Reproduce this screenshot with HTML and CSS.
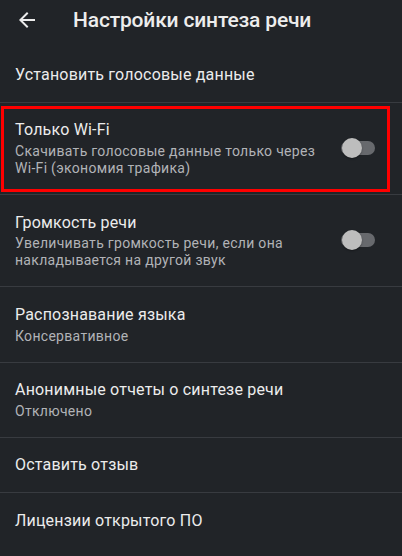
FILE: index.html
```html
<!DOCTYPE html>
<html lang="ru">
<head>
<meta charset="utf-8">
<title>Настройки синтеза речи</title>
<link rel="stylesheet" href="styles.css">
</head>
<body>
<div class="app">
  <header class="toolbar">
    <span class="back" aria-label="Назад">
      <svg width="24" height="24" viewBox="0 0 24 24"><path fill="#ececec" d="M20 11H7.83l5.59-5.59L12 4l-8 8 8 8 1.41-1.41L7.83 13H20v-2z"/></svg>
    </span>
    <h1 class="title">Настройки синтеза речи</h1>
  </header>
  <ul class="list">
    <li class="row"><div class="text"><div class="row-title">Установить голосовые данные</div></div></li>
    <li class="row row-toggle">
      <div class="text">
        <div class="row-title">Только <span class="nw">Wi-Fi</span></div>
        <div class="row-sub">Скачивать голосовые данные только через <span class="nw">Wi-Fi</span> (экономия трафика)</div>
      </div>
      <span class="switch"><span class="thumb"></span></span>
      <span class="mark"></span>
    </li>
    <li class="row row-toggle">
      <div class="text">
        <div class="row-title">Громкость речи</div>
        <div class="row-sub">Увеличивать громкость речи, если она накладывается на другой звук</div>
      </div>
      <span class="switch"><span class="thumb"></span></span>
    </li>
    <li class="row"><div class="text"><div class="row-title">Распознавание языка</div><div class="row-sub">Консервативное</div></div></li>
    <li class="row"><div class="text"><div class="row-title">Анонимные отчеты о синтезе речи</div><div class="row-sub">Отключено</div></div></li>
    <li class="row"><div class="text"><div class="row-title">Оставить отзыв</div></div></li>
    <li class="row last"><div class="text"><div class="row-title">Лицензии открытого ПО</div></div></li>
  </ul>
</div>
</body>
</html>
```
FILE: styles.css
```css
html, body {
  margin: 0;
  padding: 0;
  background: #212428;
}
body {
  font-family: Roboto, "Noto Sans", "Liberation Sans", sans-serif;
  color: #ececec;
  width: 402px;
  height: 556px;
  overflow: hidden;
}
.toolbar {
  display: flex;
  align-items: center;
  height: 40px;
  margin-bottom: 7.5px;
}
.back {
  display: flex;
  width: 24px;
  height: 24px;
  margin-left: 15px;
}
.title {
  margin: 0 0 0 34px;
  font-size: 21px;
  font-weight: 500;
  line-height: 24px;
  letter-spacing: -0.17px;
  color: #ededed;
}
.list {
  list-style: none;
  margin: 0;
  padding: 0;
}
.row {
  position: relative;
  display: flex;
  align-items: center;
  padding: 18.5px 15px 17px;
  border-bottom: 1px solid #383b40;
}
.row.last {
  border-bottom: none;
}
.text {
  flex: 1;
  min-width: 0;
}
.row-toggle .text {
  flex: 0 0 312px;
}
.nw {
  white-space: nowrap;
}
.row-title {
  font-size: 16px;
  line-height: 18.75px;
  letter-spacing: 0.19px;
  color: #ececec;
}
.row-sub {
  margin-top: 3px;
  font-size: 14px;
  line-height: 17px;
  letter-spacing: 0.3px;
  color: #b1b3b7;
}
.switch {
  position: relative;
  margin: 0 0 2px 14px;
  width: 34px;
  height: 14px;
  border-radius: 7px;
  background: #67696d;
}
.thumb {
  position: absolute;
  left: 1px;
  top: -3px;
  width: 20px;
  height: 20px;
  border-radius: 50%;
  background: #bdbdbd;
  box-shadow: 0 1px 2px rgba(0, 0, 0, 0.35);
}
.mark {
  position: absolute;
  left: 1px;
  top: 3px;
  width: 389px;
  height: 86px;
  box-sizing: border-box;
  border: 3px solid #ff0000;
  pointer-events: none;
}
```
